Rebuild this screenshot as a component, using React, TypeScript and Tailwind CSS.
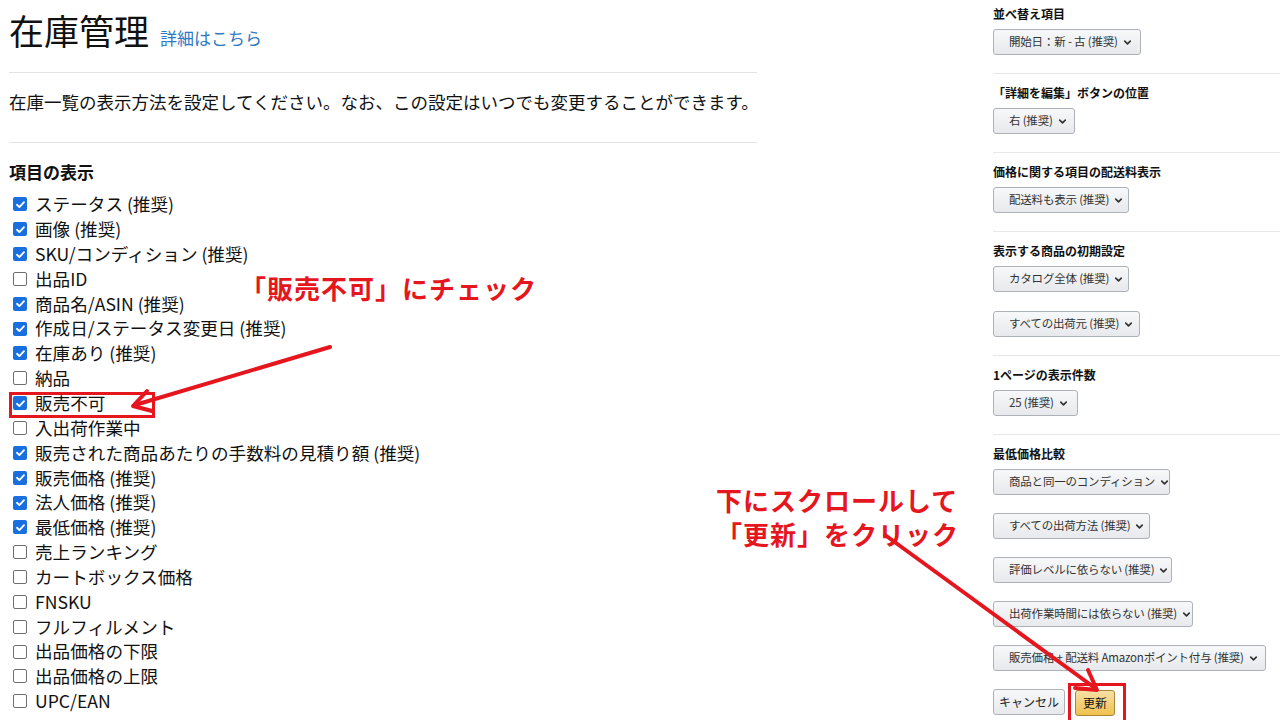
import { ChevronDown } from "lucide-react";

const FONT = { fontFamily: '"Noto Sans CJK JP", "Noto Sans", sans-serif' };

const ITEMS: Array<{ label: string; checked: boolean }> = [
  { label: "ステータス (推奨)", checked: true },
  { label: "画像 (推奨)", checked: true },
  { label: "SKU/コンディション (推奨)", checked: true },
  { label: "出品ID", checked: false },
  { label: "商品名/ASIN (推奨)", checked: true },
  { label: "作成日/ステータス変更日 (推奨)", checked: true },
  { label: "在庫あり (推奨)", checked: true },
  { label: "納品", checked: false },
  { label: "販売不可", checked: true },
  { label: "入出荷作業中", checked: false },
  { label: "販売された商品あたりの手数料の見積り額 (推奨)", checked: true },
  { label: "販売価格 (推奨)", checked: true },
  { label: "法人価格 (推奨)", checked: true },
  { label: "最低価格 (推奨)", checked: true },
  { label: "売上ランキング", checked: false },
  { label: "カートボックス価格", checked: false },
  { label: "FNSKU", checked: false },
  { label: "フルフィルメント", checked: false },
  { label: "出品価格の下限", checked: false },
  { label: "出品価格の上限", checked: false },
  { label: "UPC/EAN", checked: false },
];

function Checkbox({ checked }: { checked: boolean }) {
  if (checked) {
    return (
      <span className="flex h-[14px] w-[14px] shrink-0 items-center justify-center rounded-[2px] bg-[#1a6fdf]">
        <svg viewBox="0 0 12 12" className="h-[11px] w-[11px]">
          <path d="M2.2 6.3 L4.8 8.8 L9.8 3.4" fill="none" stroke="white" strokeWidth="2" strokeLinecap="round" strokeLinejoin="round" />
        </svg>
      </span>
    );
  }
  return <span className="h-[14px] w-[14px] shrink-0 rounded-[2px] border border-[#6f6f6f] bg-white" />;
}

function Select({ label, width }: { label: string; width: string }) {
  return (
    <div
      className={`flex h-[26px] items-center justify-between gap-[4px] rounded-[3px] border border-[#adb1b8] bg-gradient-to-b from-[#f7f8fa] to-[#e7e9ec] pl-[15px] pr-[8px] text-[11.5px] tracking-[-0.2px] text-[#333] ${width}`}
    >
      <span className="whitespace-nowrap">{label}</span>
      <ChevronDown className="h-[11px] w-[11px] shrink-0 text-[#333]" strokeWidth={3.5} />
    </div>
  );
}

function Section({ title, children, last }: { title: string; children: React.ReactNode; last?: boolean }) {
  return (
    <div className={`${last ? "" : "border-b border-[#e7e7e7]"} pt-[10px] pb-[18px]`}>
      <div className="mb-[7px] text-[12px] font-bold leading-[17px] text-[#111]">{title}</div>
      <div className={`flex flex-col ${last ? "gap-[18px]" : "gap-[19px]"}`}>{children}</div>
    </div>
  );
}

export default function App() {
  return (
    <div className="relative h-[720px] w-[1280px] overflow-hidden bg-white text-[#111]" style={FONT}>
      <div className="flex">
        {/* left column */}
        <div className="ml-[9px] w-[748px]">
          <div className="flex items-baseline gap-[11px] pt-[6px] pb-[18px]">
            <h1 className="text-[35px] font-normal leading-[48px]">在庫管理</h1>
            <a className="text-[17px] text-[#2f78c4]">詳細はこちら</a>
          </div>
          <div className="border-t border-[#e3e3e3]" />
          <p className="whitespace-nowrap pt-[16px] pb-[27px] text-[17.5px] leading-[26px]">
            在庫一覧の表示方法を設定してください。なお、この設定はいつでも変更することができます。
          </p>
          <div className="border-t border-[#e3e3e3]" />
          <h2 className="mt-[16px] mb-[7px] text-[17px] font-bold leading-[26px]">項目の表示</h2>
          <ul className="flex flex-col">
            {ITEMS.map((item) => (
              <li key={item.label} className="flex h-[24.85px] items-center gap-[8px] pl-[4px] text-[17.6px]">
                <Checkbox checked={item.checked} />
                <span className="whitespace-nowrap">{item.label}</span>
              </li>
            ))}
          </ul>
        </div>

        {/* right column */}
        <div className="-mt-[5px] ml-auto w-[287px]">
          <Section title="並べ替え項目">
            <Select label="開始日：新 - 古 (推奨)" width="w-[148px]" />
          </Section>
          <Section title="「詳細を編集」ボタンの位置">
            <Select label="右 (推奨)" width="w-[82px]" />
          </Section>
          <Section title="価格に関する項目の配送料表示">
            <Select label="配送料も表示 (推奨)" width="w-[136px]" />
          </Section>
          <Section title="表示する商品の初期設定">
            <Select label="カタログ全体 (推奨)" width="w-[136px]" />
            <Select label="すべての出荷元 (推奨)" width="w-[147px]" />
          </Section>
          <Section title="1ページの表示件数">
            <Select label="25 (推奨)" width="w-[85px]" />
          </Section>
          <Section title="最低価格比較" last>
            <Select label="商品と同一のコンディション" width="w-[177px]" />
            <Select label="すべての出荷方法 (推奨)" width="w-[157px]" />
            <Select label="評価レベルに依らない (推奨)" width="w-[179px]" />
            <Select label="出荷作業時間には依らない (推奨)" width="w-[200px]" />
            <Select label="販売価格 + 配送料 Amazonポイント付与 (推奨)" width="w-[273px]" />
            <div className="flex gap-[10px]">
              <button className="h-[26px] w-[72px] rounded-[3px] border border-[#adb1b8] bg-gradient-to-b from-[#f7f8fa] to-[#e7e9ec] text-[12px] text-[#222]">
                キャンセル
              </button>
              <div className="relative">
                <button className="h-[26px] w-[40px] rounded-[3px] border border-[#a88734] bg-gradient-to-b from-[#f7dfa5] to-[#f0c14b] text-[12px] text-[#111]">
                  更新
                </button>
                <div className="absolute -left-[7px] -top-[6px] h-[44px] w-[58px] border-[3px] border-[#e5161d]" />
              </div>
            </div>
          </Section>
        </div>
      </div>

      {/* annotations */}
      <div className="pointer-events-none absolute left-[9px] top-[392px] h-[26px] w-[146px] border-[3px] border-[#e5161d]" />
      <div className="pointer-events-none absolute left-[240px] top-[270px] text-[26px] font-bold leading-[36px] tracking-[1px] text-[#e5161d]">
        「販売不可」にチェック
      </div>
      <div className="pointer-events-none absolute left-[716px] top-[483px] text-[26px] font-bold leading-[34px] tracking-[1px] text-[#e5161d]">
        <div>下にスクロールして</div>
        <div>「更新」をクリック</div>
      </div>
      <svg className="pointer-events-none absolute inset-0" width="1280" height="720" viewBox="0 0 1280 720">
        <g stroke="#e5161d" strokeWidth="4" fill="none" strokeLinecap="round" strokeLinejoin="round">
          <line x1="330" y1="347" x2="135" y2="405" />
          <polyline points="152,411 133,406 147,391" />
          <line x1="885" y1="535" x2="1095" y2="688" />
          <polyline points="1088,670 1097,690 1075,688" />
        </g>
      </svg>
    </div>
  );
}
